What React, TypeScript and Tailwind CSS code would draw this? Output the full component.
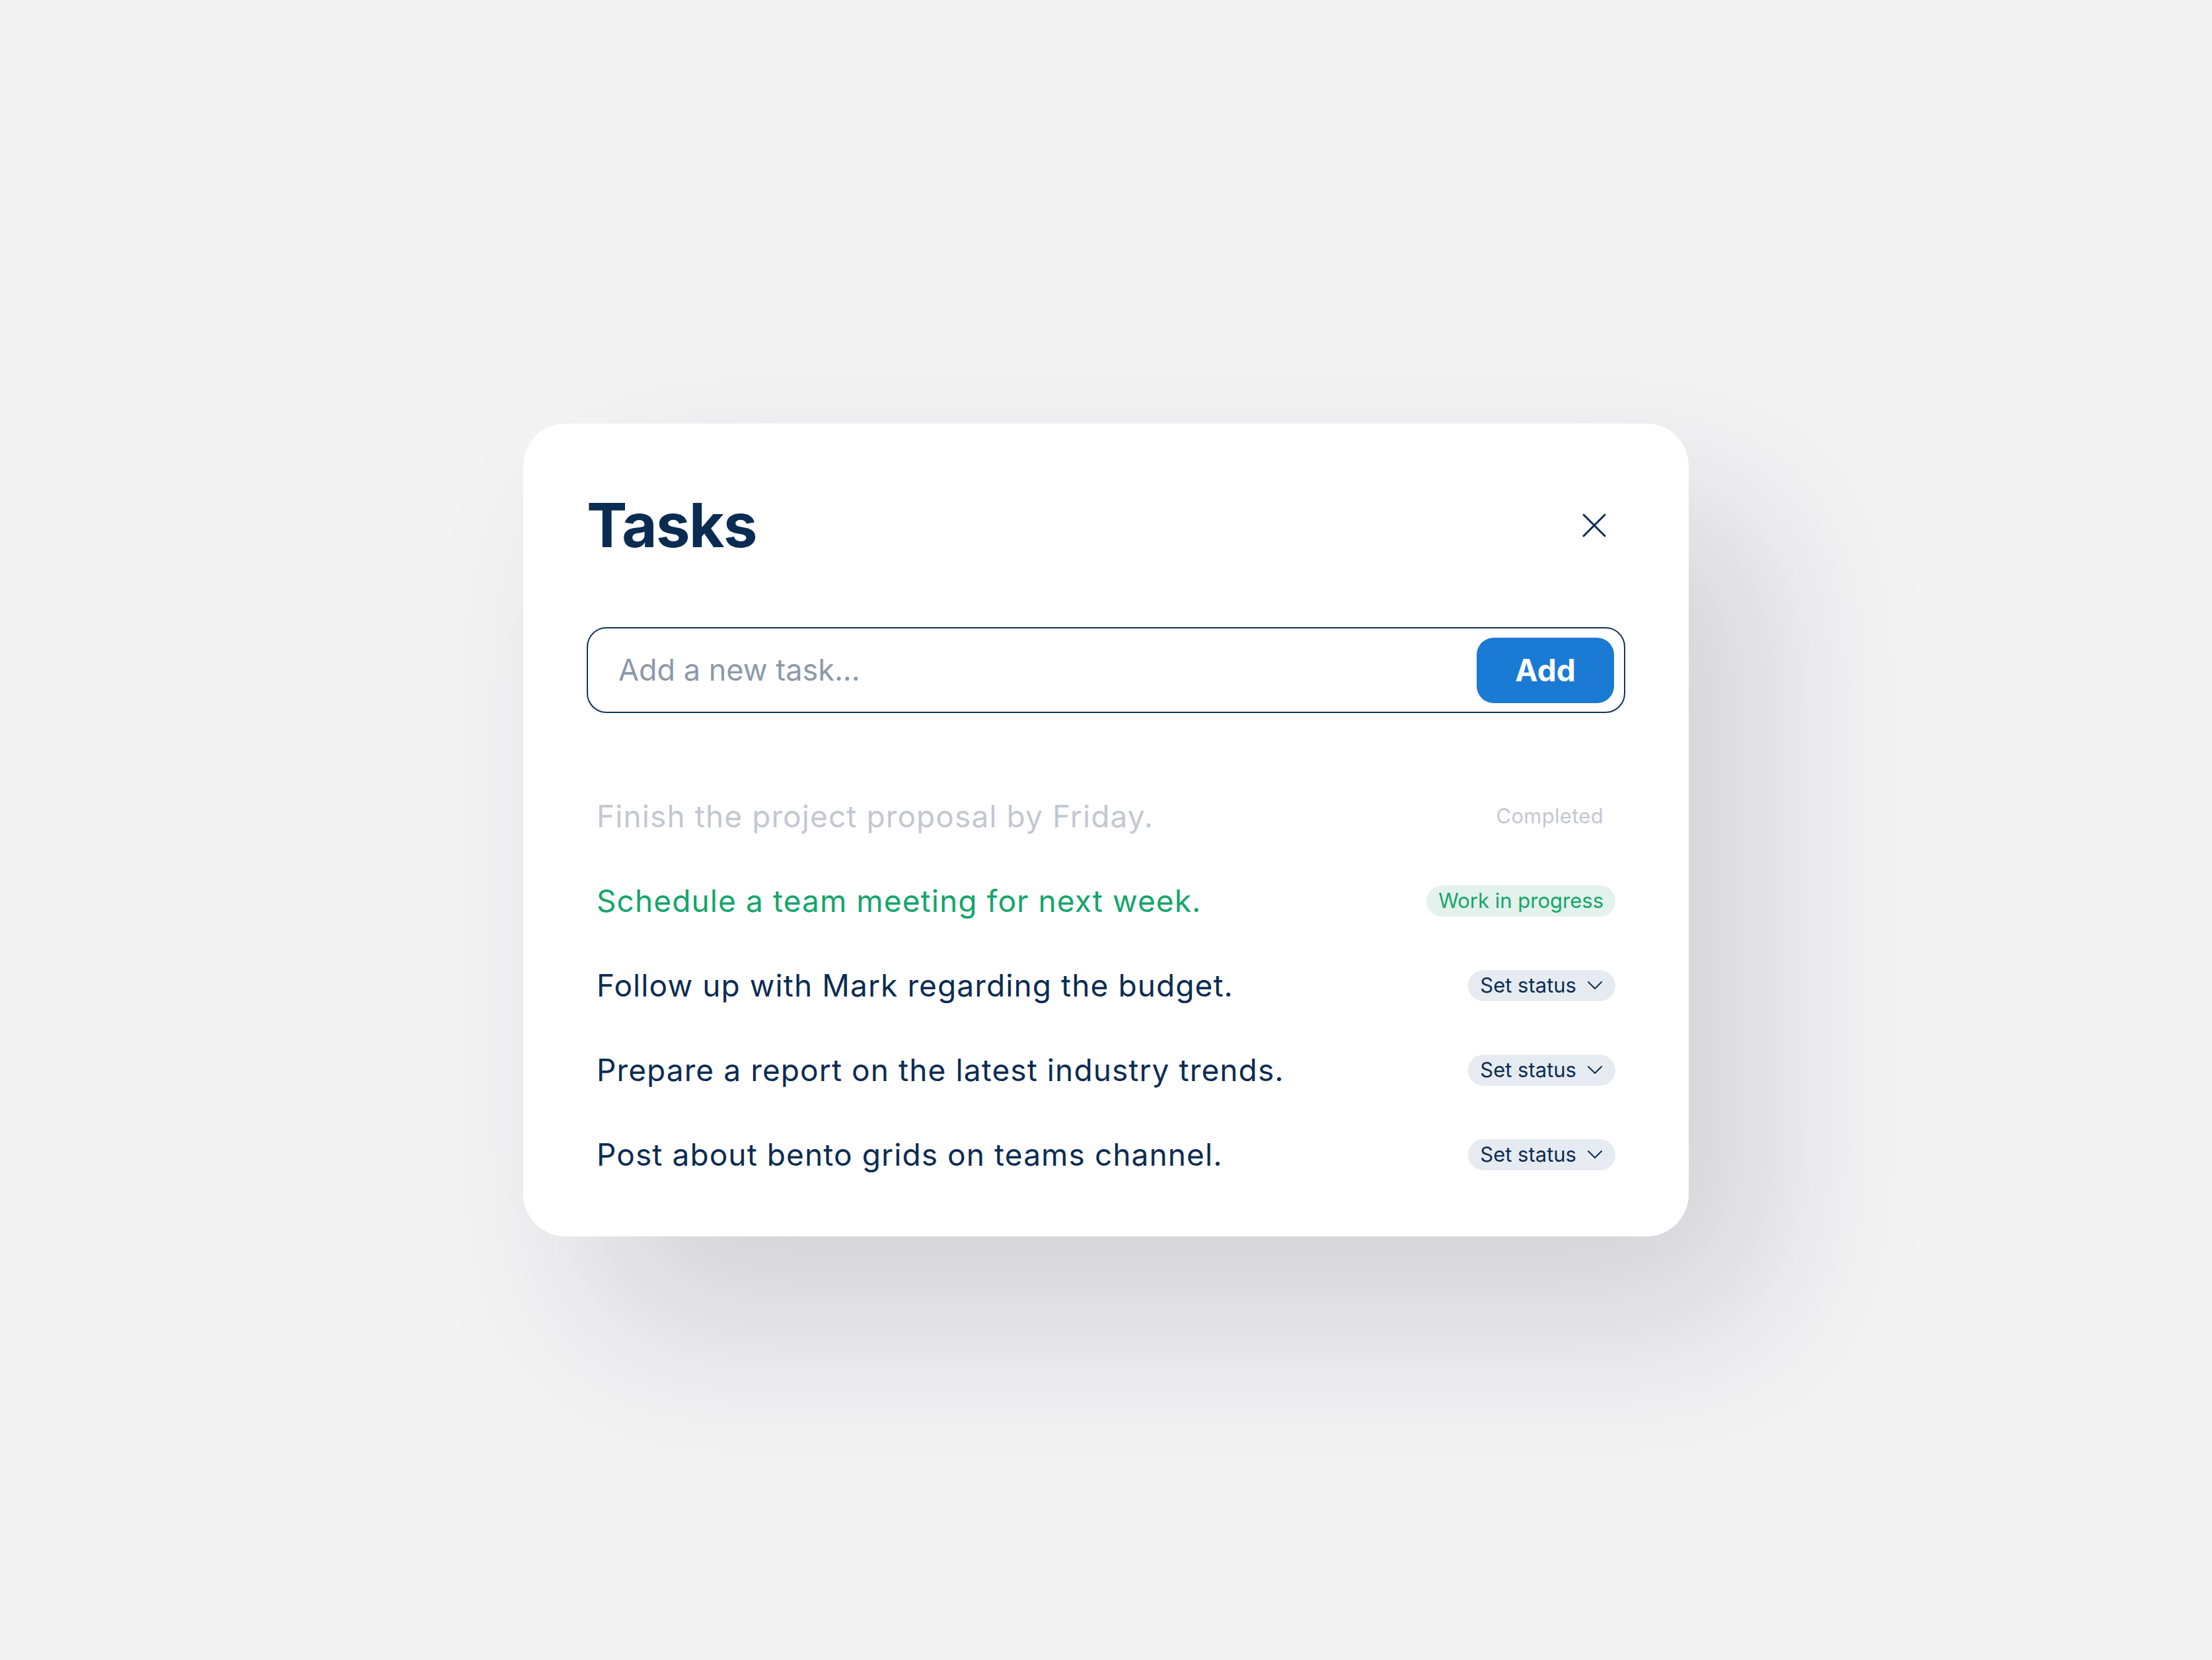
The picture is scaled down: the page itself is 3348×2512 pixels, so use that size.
import React from "react";

type Task = { text: string; status: "completed" | "progress" | "none" };

const tasks: Task[] = [
  { text: "Finish the project proposal by Friday.", status: "completed" },
  { text: "Schedule a team meeting for next week.", status: "progress" },
  { text: "Follow up with Mark regarding the budget.", status: "none" },
  { text: "Prepare a report on the latest industry trends.", status: "none" },
  { text: "Post about bento grids on teams channel.", status: "none" },
];

function StatusBadge({ status }: { status: Task["status"] }) {
  if (status === "completed") {
    return (
      <span className="flex h-[47px] items-center px-[18px] text-[31px] tracking-[0.3px] text-[#c3c8d0]">
        Completed
      </span>
    );
  }
  if (status === "progress") {
    return (
      <span className="flex h-[47px] items-center rounded-full bg-[#e3f2ec] px-[18px] text-[31px] text-[#14a56b]">
        Work in progress
      </span>
    );
  }
  return (
    <button className="flex h-[47px] items-center gap-[17px] rounded-full bg-[#e6ebf1] pl-[18px] pr-[20px] text-[31px] text-[#0b2c52]">
      <span>Set status</span>
      <svg width="22" height="12" viewBox="0 0 22 12" fill="none">
        <path d="M1 1 L11 11 L21 1" stroke="#0b2c52" strokeWidth="2" strokeLinecap="round" strokeLinejoin="round" />
      </svg>
    </button>
  );
}

export default function App() {
  return (
    <div
      className="flex min-h-screen w-full items-center justify-center bg-[#f3f3f4]"
      style={{ fontFamily: "Inter, 'Noto Sans', sans-serif" }}
    >
      <div className="w-[1764px] rounded-[64px] bg-white px-[96px] pb-[60px] pt-[96px] shadow-[110px_130px_300px_rgba(25,30,55,0.15)]">
        <div className="flex h-[116px] items-center justify-between">
          <h1 className="text-[92px] font-bold leading-none tracking-[-1.5px] text-[#0b2c52]">Tasks</h1>
          <button className="mr-[15px] flex h-[64px] w-[64px] items-center justify-center">
            <svg width="36" height="36" viewBox="0 0 36 36" fill="none">
              <path d="M2 2 L34 34 M34 2 L2 34" stroke="#0b2c52" strokeWidth="3" strokeLinecap="round" />
            </svg>
          </button>
        </div>

        <div className="mt-[96px] flex h-[130px] items-center rounded-[30px] border-2 border-[#133559] pl-[46px] pr-[15px]">
          <span className="flex-1 text-[45px] text-[#8d99a8]">Add a new task...</span>
          <button className="flex h-[99px] w-[208px] items-center justify-center rounded-[26px] bg-[#1a7ad4] text-[46px] font-bold text-white">
            Add
          </button>
        </div>

        <div className="mt-[92px] flex flex-col px-[15px]">
          {tasks.map((t) => (
            <div key={t.text} className="flex h-[128px] items-center justify-between">
              <span
                className={
                  "text-[46px] tracking-[1.1px] " +
                  (t.status === "completed"
                    ? "text-[#c3c8d0]"
                    : t.status === "progress"
                    ? "text-[#14a56b]"
                    : "text-[#0b2c52]")
                }
              >
                {t.text}
              </span>
              <StatusBadge status={t.status} />
            </div>
          ))}
        </div>
      </div>
    </div>
  );
}
